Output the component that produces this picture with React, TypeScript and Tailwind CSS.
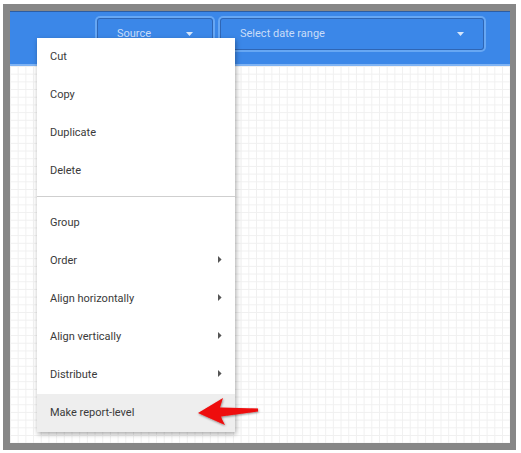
import React from "react";

const Tri = () => (
  <svg width="4" height="7" viewBox="0 0 4 7" className="mr-[13px] -mt-[3px]">
    <path d="M0 0 L3.6 3.5 L0 7 Z" fill="#555" />
  </svg>
);

const Down = () => (
  <svg width="7" height="4" viewBox="0 0 7 4">
    <path d="M0 0 L7 0 L3.5 4 Z" fill="#d6e6fb" />
  </svg>
);

function Item({ label, sub, active }: { label: string; sub?: boolean; active?: boolean }) {
  return (
    <div
      className={`h-[38px] flex items-center justify-between pl-[13px] ${active ? "bg-[#eeeeee]" : ""}`}
    >
      <span className="text-[11px] text-[#3a3a3a]">{label}</span>
      {sub && <Tri />}
    </div>
  );
}

export default function App() {
  return (
    <div
      className="relative w-[521px] h-[453px] bg-white pl-[3px] pt-[4px]"
      style={{ fontFamily: "Roboto, 'Liberation Sans', sans-serif" }}
    >
      <div className="w-[513px] h-[446px] border-l-[7px] border-t-[7px] border-r-[6px] border-b-[7px] border-[#878787] flex flex-col bg-white">
        <div className="h-[53px] bg-[#3b87e8] border-t border-[#2c5da3] flex items-start pl-[87px] pt-[6px] gap-[7px]">
          <div className="w-[116px] h-[32px] rounded-[3px] border border-[#2f66b5] shadow-[0_0_0_2px_#67a7f3] flex items-center pl-[19px] pr-[19px] justify-between">
            <span className="text-[11px] text-[#c9ddf8]">Source</span>
            <Down />
          </div>
          <div className="w-[264px] h-[32px] rounded-[3px] border border-[#2f66b5] shadow-[0_0_0_2px_#67a7f3] flex items-center pl-[19px] pr-[19px] justify-between">
            <span className="text-[11px] text-[#c9ddf8]">Select date range</span>
            <Down />
          </div>
        </div>
        <div className="h-[2px] bg-[#7fb3f3]" />
        <div
          className="flex-1"
          style={{
            backgroundImage:
              "linear-gradient(to right, #f0f0f0 1px, transparent 1px), linear-gradient(to bottom, #f0f0f0 1px, transparent 1px)",
            backgroundSize: "7.7px 7.7px",
          }}
        />
      </div>

      <div className="absolute left-[37px] top-[38px] w-[198px] bg-white shadow-[1px_2px_5px_rgba(0,0,0,0.35)]">
        <Item label="Cut" />
        <Item label="Copy" />
        <Item label="Duplicate" />
        <Item label="Delete" />
        <div className="h-[6px]" />
        <div className="h-px bg-[#cfcfcf]" />
        <div className="h-[7px]" />
        <Item label="Group" />
        <Item label="Order" sub />
        <Item label="Align horizontally" sub />
        <Item label="Align vertically" sub />
        <Item label="Distribute" sub />
        <Item label="Make report-level" active />
      </div>

      <svg
        className="absolute left-[190px] top-[392px]"
        width="75"
        height="40"
        viewBox="190 392 75 40"
      >
        <defs>
          <filter id="sh" x="-20%" y="-30%" width="140%" height="160%">
            <feDropShadow dx="0.5" dy="1" stdDeviation="0.8" floodColor="#000" floodOpacity="0.45" />
          </filter>
        </defs>
        <path
          d="M198 413 L223 398 Q221 404 220 407.5 L258 408.5 L258 411.5 L221 416.5 Q222 420 225 425 Z"
          fill="#ee0a0a"
          filter="url(#sh)"
        />
      </svg>
    </div>
  );
}
